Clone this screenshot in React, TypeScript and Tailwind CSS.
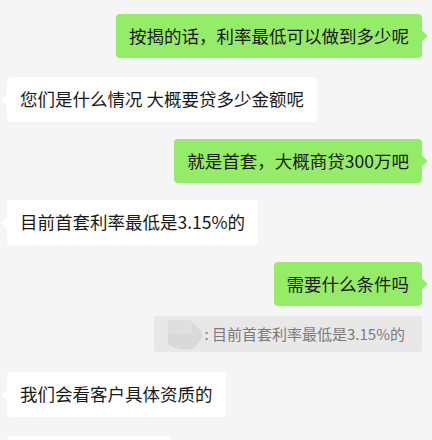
import React from "react";

const font = { fontFamily: '"Noto Sans CJK SC", "Noto Sans", sans-serif' };

function Right({ text, className = "" }: { text: string; className?: string }) {
  return (
    <div className={"flex justify-end pr-[10px] " + className}>
      <div className="relative rounded-[4px] bg-[#95ec69] px-[13px] pt-[10px] pb-[10px] text-[17.5px] leading-[24px] text-[#191919]">
        <span className="absolute right-[-4px] top-1/2 h-2 w-2 -translate-y-1/2 rotate-45 rounded-[1px] bg-[#95ec69]" />
        <span className="relative">{text}</span>
      </div>
    </div>
  );
}

function Left({ text, className = "", w }: { text: string; className?: string; w?: string }) {
  return (
    <div className={"flex justify-start pl-[7px] " + className}>
      <div className={"relative rounded-[4px] bg-white px-[13px] pt-[10px] pb-[11px] text-[17.5px] leading-[24px] text-[#191919] " + (w ?? "")}>
        <span className="absolute left-[-4px] top-1/2 h-2 w-2 -translate-y-1/2 rotate-45 rounded-[1px] bg-white" />
        <span className="relative whitespace-pre">{text}</span>
      </div>
    </div>
  );
}

export default function App() {
  return (
    <div className="h-[440px] w-full overflow-hidden bg-[#f5f5f5]" style={font}>
      <div className="flex flex-col pt-[14px]">
        <Right text="按揭的话，利率最低可以做到多少呢" />
        <Left className="mt-[19px]" text="您们是什么情况 大概要贷多少金额呢" />
        <Right className="mt-[17px]" text="就是首套，大概商贷300万吧" />
        <Left className="mt-[17px]" text="目前首套利率最低是3.15%的" />
        <Right className="mt-[17px]" text="需要什么条件吗" />
        <div className="mt-[10px] flex justify-end pr-[10px]">
          <div className="flex h-[36px] items-center rounded-[3px] bg-[#e8e8e8] pl-[14px] pr-[17px] text-[15px] text-[#7a7a7a]">
            <svg width="36" height="30" viewBox="0 0 36 30" className="mr-[1px] mt-[2px]">
              <path d="M3 0 H22 L34 12 L34 18 L26 28 Q18 31 8 28 L3 26 Q0 25 0 22 V3 Q0 0 3 0 Z" fill="#d9d9d9" />
              <rect x="0" y="0" width="14" height="14" rx="2" fill="#dedede" />
              <rect x="14" y="0" width="10" height="14" fill="#e0e0e0" />
            </svg>
            <span>: 目前首套利率最低是3.15%的</span>
          </div>
        </div>
        <Left className="mt-[20px]" text="我们会看客户具体资质的" />
        <Left className="mt-[19px]" w="w-[163px]" text=" " />
      </div>
    </div>
  );
}
